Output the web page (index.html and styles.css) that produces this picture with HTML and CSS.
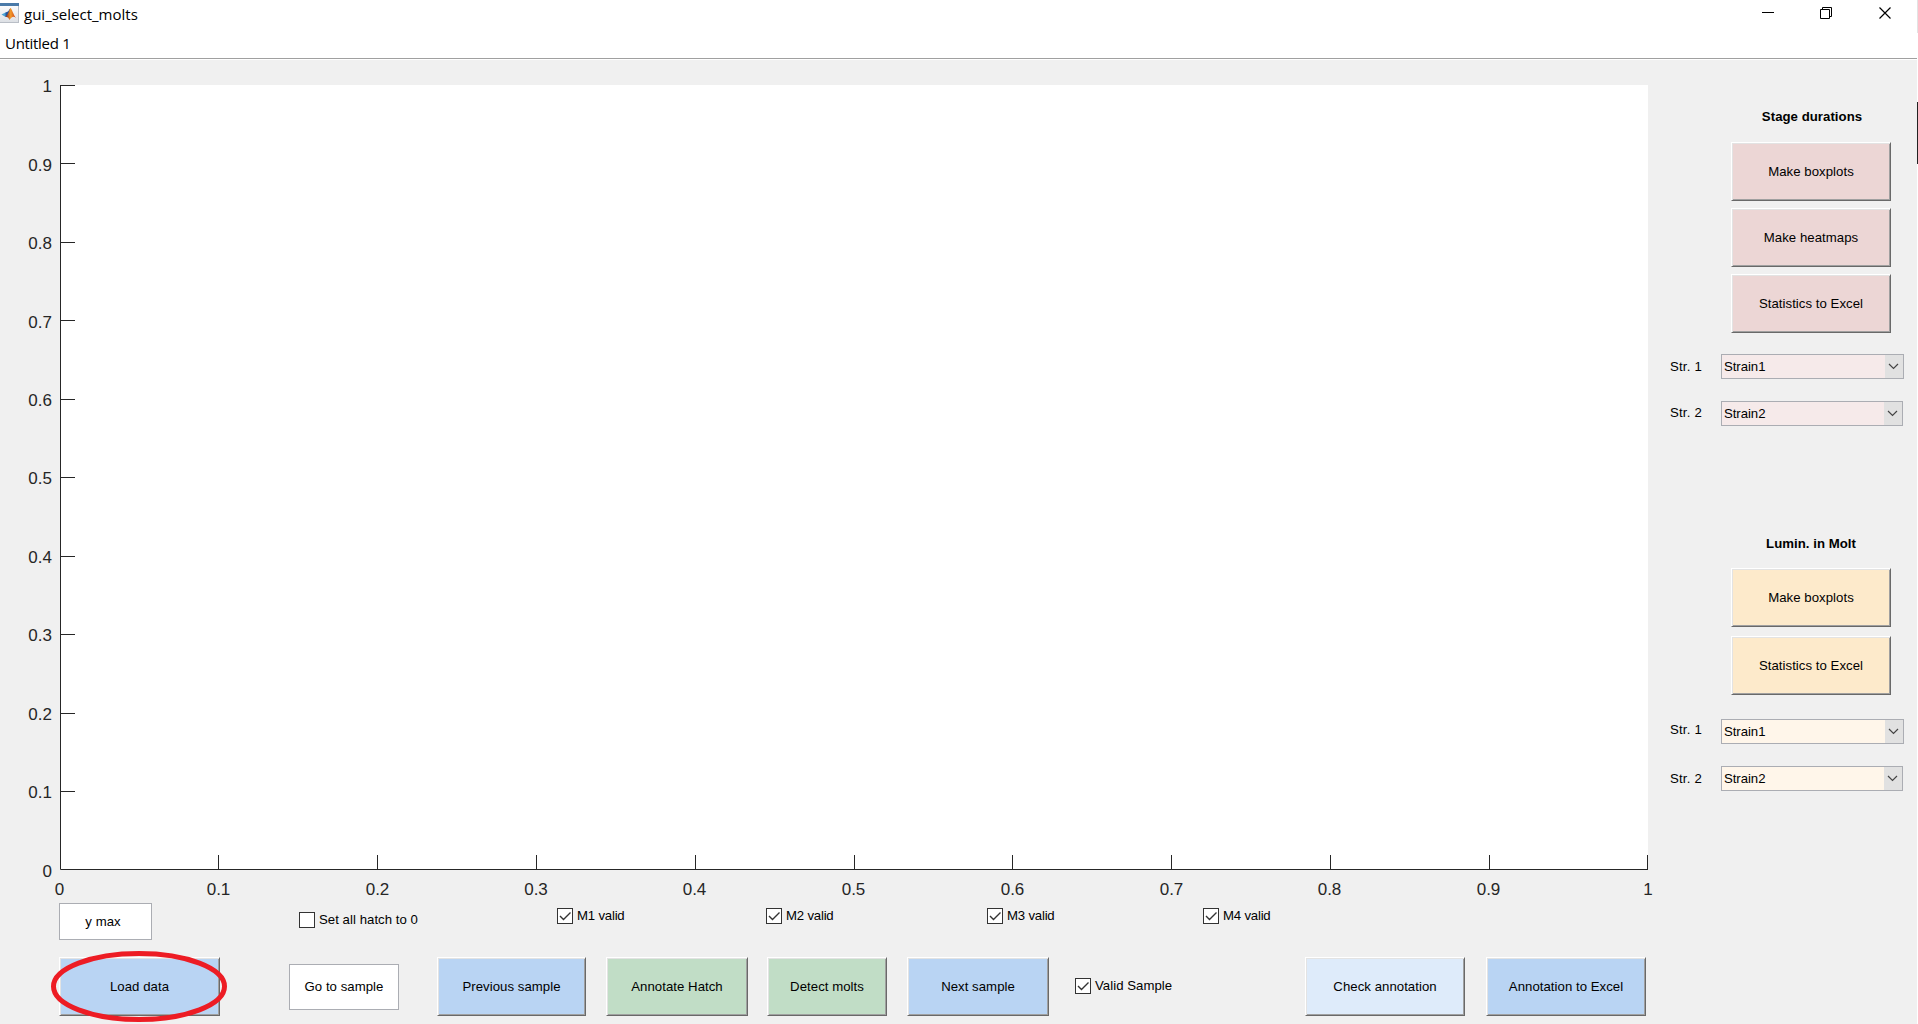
FILE: index.html
```html
<!DOCTYPE html>
<html lang="en">
<head>
<meta charset="utf-8">
<title>gui_select_molts</title>
<link rel="stylesheet" href="styles.css">
</head>
<body>
<div class="window">
  <header class="titlebar">
    <svg class="app-icon" width="19" height="20" viewBox="0 0 19 20">
      <defs>
        <linearGradient id="flame" x1="0" x2="1"><stop offset="0" stop-color="#8c1f10"/><stop offset=".5" stop-color="#f39a2a"/><stop offset="1" stop-color="#c8320f"/></linearGradient>
        <linearGradient id="face" x1="0" x2="0" y1="0" y2="1"><stop offset="0" stop-color="#fff"/><stop offset="1" stop-color="#dcdfe4"/></linearGradient>
      </defs>
      <rect x="-1" y=".5" width="19.5" height="19" fill="url(#face)" stroke="#b9bec6"/>
      <rect x="0" y="0" width="19" height="3" fill="#4a7aa8"/>
      <path d="M1.500 11.500 5.500 9.500 8 11 5.500 14z" fill="#4ba3d4"/>
      <path d="M5.500 9.500 8 8.500 10.500 5 8.500 13 5.500 14z" fill="#27559b"/>
      <path d="M10.500 5C12 6 13 11 16 15 13.500 13 12 13.500 9.500 17 8.500 14.500 7.500 13.500 5.500 14 8 12.500 9.500 6 10.500 5z" fill="url(#flame)"/>
    </svg>
    <span class="title">gui_select_molts</span>
    <svg class="controls" width="132" height="14" viewBox="0 0 132 14" fill="none" stroke="#000">
      <path d="M0 6.500H12"/>
      <path d="M58.500 3.500H67.500V12.500H58.500zM60.500 3.500V1.500H69.500V10.500H67.500"/>
      <path d="M117.500 1.500 128.500 12.500M128.500 1.500 117.500 12.500" stroke-width="1.200"/>
    </svg>
  </header>
  <nav class="menubar"><span>Untitled 1</span></nav>
  <div class="body">
    <main class="main">
      <svg class="plot" width="1660" height="815" viewBox="0 85 1660 815">
        <rect x="60" y="85" width="1588" height="785" fill="#fff"/>
        <path class="axis" d="M60.500 85V869.500H1648M60 85.500H75M60 163.500H75M60 242.500H75M60 320.500H75M60 399.500H75M60 477.500H75M60 556.500H75M60 634.500H75M60 713.500H75M60 791.500H75M218.500 855V870M377.500 855V870M536.500 855V870M695.500 855V870M854.500 855V870M1012.500 855V870M1171.500 855V870M1330.500 855V870M1489.500 855V870M1647.500 855V870"/>
        <g class="labels-y">
          <text x="52" y="92">1</text><text x="52" y="171">0.9</text><text x="52" y="249">0.8</text><text x="52" y="328">0.7</text><text x="52" y="406">0.6</text><text x="52" y="484">0.5</text><text x="52" y="563">0.4</text><text x="52" y="641">0.3</text><text x="52" y="720">0.2</text><text x="52" y="798">0.1</text><text x="52" y="877">0</text>
        </g>
        <g class="labels-x">
          <text x="59.500" y="895">0</text><text x="218.500" y="895">0.1</text><text x="377.500" y="895">0.2</text><text x="536" y="895">0.3</text><text x="694.500" y="895">0.4</text><text x="853.500" y="895">0.5</text><text x="1012.500" y="895">0.6</text><text x="1171.500" y="895">0.7</text><text x="1329.500" y="895">0.8</text><text x="1488.500" y="895">0.9</text><text x="1648" y="895">1</text>
        </g>
      </svg>
      <div class="row options">
        <div class="edit ymax">y max</div>
        <label class="check hatch"><svg class="box" viewBox="0 0 16 16"><rect x=".5" y=".5" width="15" height="15"/></svg>Set all hatch to 0</label>
        <label class="check m1"><svg class="box" viewBox="0 0 16 16"><rect x=".5" y=".5" width="15" height="15"/><path d="M3 8 6.500 11.500 13.500 4.500"/></svg>M1 valid</label>
        <label class="check m2"><svg class="box" viewBox="0 0 16 16"><rect x=".5" y=".5" width="15" height="15"/><path d="M3 8 6.500 11.500 13.500 4.500"/></svg>M2 valid</label>
        <label class="check m3"><svg class="box" viewBox="0 0 16 16"><rect x=".5" y=".5" width="15" height="15"/><path d="M3 8 6.500 11.500 13.500 4.500"/></svg>M3 valid</label>
        <label class="check m4"><svg class="box" viewBox="0 0 16 16"><rect x=".5" y=".5" width="15" height="15"/><path d="M3 8 6.500 11.500 13.500 4.500"/></svg>M4 valid</label>
      </div>
      <div class="row actions">
        <div class="btn blue load">Load data
          <svg class="ring" width="176" height="71" viewBox="0 0 176 71"><ellipse cx="88" cy="35.500" rx="85.500" ry="33"/></svg>
        </div>
        <div class="edit goto">Go to sample</div>
        <div class="btn blue previous">Previous sample</div>
        <div class="btn green annotate">Annotate Hatch</div>
        <div class="btn green detect">Detect molts</div>
        <div class="btn blue next">Next sample</div>
        <label class="check valid"><svg class="box" viewBox="0 0 16 16"><rect x=".5" y=".5" width="15" height="15"/><path d="M3 8 6.500 11.500 13.500 4.500"/></svg>Valid Sample</label>
        <div class="btn pale checkann">Check annotation</div>
        <div class="btn blue export">Annotation to Excel</div>
      </div>
    </main>
    <aside class="side">
      <section class="group durations">
        <h2>Stage durations</h2>
        <div class="btn rose">Make boxplots</div>
        <div class="btn rose">Make heatmaps</div>
        <div class="btn rose">Statistics to Excel</div>
        <div class="field"><span>Str. 1</span><div class="select"><b>Strain1</b><i><svg width="11" height="7" viewBox="0 0 11 7"><path d="M1 1 5.500 5.500 10 1"/></svg></i></div></div>
        <div class="field second"><span>Str. 2</span><div class="select"><b>Strain2</b><i><svg width="11" height="7" viewBox="0 0 11 7"><path d="M1 1 5.500 5.500 10 1"/></svg></i></div></div>
      </section>
      <section class="group lumin">
        <h2>Lumin. in Molt</h2>
        <div class="btn sand">Make boxplots</div>
        <div class="btn sand">Statistics to Excel</div>
        <div class="field"><span>Str. 1</span><div class="select"><b>Strain1</b><i><svg width="11" height="7" viewBox="0 0 11 7"><path d="M1 1 5.500 5.500 10 1"/></svg></i></div></div>
        <div class="field second"><span>Str. 2</span><div class="select"><b>Strain2</b><i><svg width="11" height="7" viewBox="0 0 11 7"><path d="M1 1 5.500 5.500 10 1"/></svg></i></div></div>
      </section>
    </aside>
  </div>
</div>
<div class="edge"><div class="edge-top"></div><div class="edge-dark"></div></div>
</body>
</html>
```
FILE: styles.css
```css
* { box-sizing: border-box; }
body {
  margin: 0;
  height: 1024px;
  display: flex;
  overflow: hidden;
  background: #fff;
  color: #000;
  font: 13.2px/16px "Liberation Sans", Arial, sans-serif;
  letter-spacing: .04px;
}
svg { display: block; flex: none; }
.window { width: 1917px; height: 1024px; display: flex; flex-direction: column; }

.titlebar { height: 30px; display: flex; align-items: flex-start; padding-top: 3px; font: 15px/22px "Open Sans", "Noto Sans", sans-serif; letter-spacing: 0; }
.title { margin-left: 5px; }
.controls { margin: 3px 23px 0 auto; }
.menubar { height: 29px; padding: 2px 5px 0; border-bottom: 1px solid #a0a0a0; font: 15px/22px "Open Sans", "Noto Sans", sans-serif; letter-spacing: -.3px; }

.body { flex: 1; display: flex; background: #f0f0f0; border-top: 1px solid #fff; }
.main { width: 1660px; padding-top: 25px; }
.plot { overflow: visible; }
.axis { fill: none; stroke: #262626; }
.labels-x, .labels-y { font-size: 17px; fill: #262626; letter-spacing: 0; }
.labels-y { text-anchor: end; }
.labels-x { text-anchor: middle; }

.row { display: flex; align-items: flex-start; padding-left: 59px; }
.options { height: 57px; padding-top: 3px; }
.actions { height: 67px; }

.btn {
  position: relative;
  height: 59px;
  display: flex;
  align-items: center;
  justify-content: center;
  white-space: nowrap;
  border: 1px solid;
  border-color: #fff #696969 #696969 #fff;
  box-shadow: inset 1px 1px #e3e3e3, inset -1px -1px #a0a0a0;
}
.blue { background: #b9d4f3; }
.green { background: #c1ddc6; }
.pale { background: #deebfa; }
.rose { background: #ecd6d5; }
.sand { background: #fdeacb; }

.edit { display: flex; align-items: center; justify-content: center; background: #fff; border: 1px solid #abadb3; }
.ymax { width: 93px; height: 37px; padding-right: 5px; }
.goto { width: 110px; height: 46px; margin: 7px 0 0 69px; }

.check { display: flex; align-items: center; gap: 4px; height: 16px; white-space: nowrap; }
.box { width: 16px; height: 16px; fill: none; stroke: #333; }
.box rect { fill: #fff; }
.box path { stroke-width: 1.4; }
.hatch { width: 258px; margin: 9px 0 0 147px; }
.m1 { width: 209px; margin-top: 5px; }
.m2 { width: 221px; margin-top: 5px; }
.m3 { width: 216px; margin-top: 5px; }
.m4 { margin-top: 5px; }
.m1, .m2, .m3, .m4 { letter-spacing: -.2px; }

.load { width: 161px; }
.previous { width: 149px; margin-left: 38px; }
.annotate { width: 142px; margin-left: 20px; }
.detect { width: 120px; margin-left: 19px; }
.next { width: 142px; margin-left: 20px; }
.valid { width: 230px; margin: 21px 0 0 26px; }
.checkann { width: 160px; }
.export { width: 160px; margin-left: 21px; }
.ring { position: absolute; left: -9px; top: -7px; fill: none; stroke: #ed1c24; stroke-width: 5; }

.side { width: 257px; padding-top: 49px; }
.group { display: flex; flex-direction: column; }
.group h2 { margin: 0 0 17px 72px; width: 160px; font-size: 13.2px; line-height: 16px; text-align: center; }
.group .btn { width: 160px; margin-left: 71px; }
.durations .btn + .btn { margin-top: 7px; }
.durations { height: 427px; }
.lumin h2 { margin: 0 0 16px 71px; }
.lumin .btn + .btn { margin-top: 9px; }
.field { display: flex; align-items: center; height: 25px; margin: 21px 0 0 10px; }
.field span { width: 51px; letter-spacing: .2px; }
.field.second { margin-top: 22px; }
.field.second span { margin-top: -2px; }
.lumin .field { margin-top: 24px; }
.lumin .field span { margin-top: -4px; }
.lumin .second { margin-top: 22px; }
.lumin .second span { margin-top: 0; }
.select { display: flex; width: 183px; height: 25px; background: #f6eaea; border: 1px solid #abadb3; letter-spacing: -.05px; }
.second .select { width: 182px; }
.lumin .select { background: #fff6ea; }
.select b { flex: 1; padding-left: 2px; font-weight: 400; line-height: 24px; }
.select i { width: 18px; padding-right: 1px; display: flex; align-items: center; justify-content: center; background: #e1e1e1; }
.select path { fill: none; stroke: #444; stroke-width: 1.2; }

.edge { width: 1px; }
.edge-top { height: 33px; margin-bottom: 69px; background: #e3e3e3; }
.edge-dark { height: 62px; background: #222; }
```
